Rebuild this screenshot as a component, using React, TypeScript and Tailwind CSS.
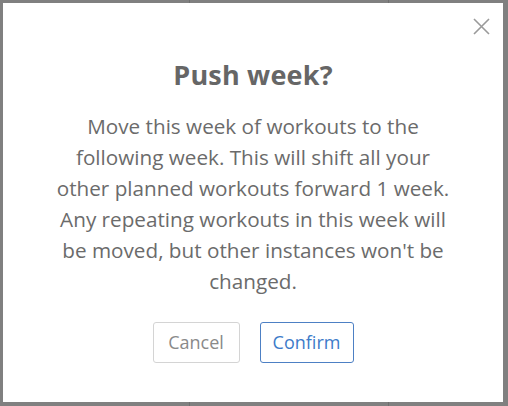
import React from "react";

const lines = [
  "Move this week of workouts to the",
  "following week. This will shift all your",
  "other planned workouts forward 1 week.",
  "Any repeating workouts in this week will",
  "be moved, but other instances won't be",
  "changed.",
];

export default function App() {
  return (
    <div className="relative w-[508px] h-[406px] bg-[#808080] pl-[3px] pt-[3px] pr-[5px] pb-[4px] overflow-hidden" style={{ fontFamily: "'Open Sans', Lato, sans-serif" }}>
      {/* backdrop calendar hints */}
      <div className="absolute left-[189px] top-0 w-px h-full bg-[#6f6f6f]" />
      <div className="absolute left-[388px] top-0 w-px h-full bg-[#6f6f6f]" />

      <div className="relative h-full bg-white flex flex-col items-center pt-[55px]">
        <button className="absolute right-[12px] top-[13px] w-[20px] h-[20px] flex items-center justify-center">
          <svg width="17" height="17" viewBox="0 0 17 17" fill="none" stroke="#9a9a9a" strokeWidth="1.6">
            <path d="M1 1 L16 16 M16 1 L1 16" />
          </svg>
        </button>
        <h1 className="text-[27px] leading-[34px] font-bold text-[#666666] tracking-[0.2px]">Push week?</h1>
        <p className="mt-[19px] flex flex-col items-center whitespace-nowrap text-[20.7px] leading-[31px] text-[#6b6b6b]">
          {lines.map((l) => (
            <span key={l}>{l}</span>
          ))}
        </p>
        <div className="mt-[25px] flex gap-[20px]">
          <button className="w-[87px] h-[41px] rounded-[3px] border border-[#d4d4d4] text-[18px] text-[#8a8a8a]">Cancel</button>
          <button className="w-[94px] h-[41px] rounded-[3px] border border-[#4d80c4] text-[18px] text-[#3d7bc9]">Confirm</button>
        </div>
      </div>
    </div>
  );
}
